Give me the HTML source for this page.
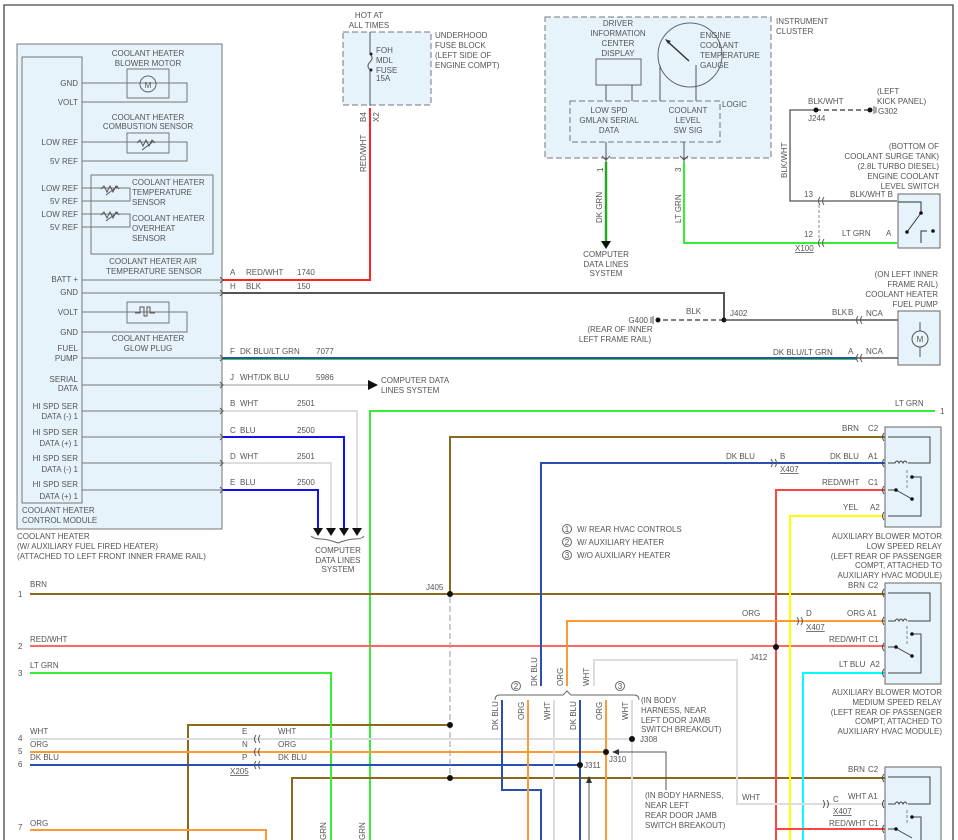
<!DOCTYPE html>
<html><head><meta charset="utf-8"><style>
html,body{margin:0;padding:0;background:#fff}
svg{display:block}
text{font-family:"Liberation Sans",sans-serif;font-size:8px;fill:#555}
.r{text-anchor:end}.m{text-anchor:middle}
</style></head><body>
<svg width="958" height="840" viewBox="0 0 958 840" xmlns="http://www.w3.org/2000/svg">
<rect x="0" y="0" width="958" height="840" fill="#fff"/>
<path d="M4 840V5H953V840" fill="none" stroke="#444" stroke-width="1.3"/>
<!-- module -->
<rect x="17" y="44" width="205" height="485" fill="#e6f3fb" stroke="#777"/>
<rect x="22" y="57" width="60" height="446" fill="#e6f3fb" stroke="#777"/>
<g fill="none" stroke="#777">
<rect x="127" y="69" width="42" height="29"/><rect x="127" y="133" width="42" height="20"/>
<rect x="91" y="175" width="122" height="79"/><rect x="127" y="302" width="42" height="21"/>
<path d="M82 83H187V102H82M82 142H187V161H82M82 188H130V201H82M82 214H130V227H82M82 312H187V332H82"/>
<path d="M82 280H222M82 293H222M82 358H222M82 385H222M82 411H222M82 437H222M82 463H222M82 490H222"/>
</g>
<circle cx="148" cy="84" r="8" fill="none" stroke="#666"/><text x="148" y="88" class="m" font-size="9">M</text>
<path d="M137 143l3-3 3 6 3-6 3 6 3-6 3 3M142 150l12-9" fill="none" stroke="#555"/>
<path d="M101 189l3-3 3 6 3-6 3 6 3-6 3 3M106 195l12-9M101 215l3-3 3 6 3-6 3 6 3-6 3 3M106 221l12-9" fill="none" stroke="#555"/>
<path d="M135 313h5v-6h4v9h3v-9h3v6h5" fill="none" stroke="#555"/>
<g>
<text x="148" y="56" class="m">COOLANT HEATER</text><text x="148" y="66" class="m">BLOWER MOTOR</text>
<text x="148" y="120" class="m">COOLANT HEATER</text><text x="148" y="129" class="m">COMBUSTION SENSOR</text>
<text x="132" y="185">COOLANT HEATER</text><text x="132" y="195">TEMPERATURE</text><text x="132" y="205">SENSOR</text>
<text x="132" y="221">COOLANT HEATER</text><text x="132" y="231">OVERHEAT</text><text x="132" y="241">SENSOR</text>
<text x="153" y="264" class="m">COOLANT HEATER AIR</text><text x="154" y="274" class="m">TEMPERATURE SENSOR</text>
<text x="148" y="341" class="m">COOLANT HEATER</text><text x="148" y="351" class="m">GLOW PLUG</text>
<text x="78" y="86" class="r">GND</text><text x="78" y="105" class="r">VOLT</text>
<text x="78" y="145" class="r">LOW REF</text><text x="78" y="164" class="r">5V REF</text>
<text x="78" y="191" class="r">LOW REF</text><text x="78" y="204" class="r">5V REF</text>
<text x="78" y="217" class="r">LOW REF</text><text x="78" y="230" class="r">5V REF</text>
<text x="78" y="282" class="r">BATT +</text><text x="78" y="295" class="r">GND</text>
<text x="78" y="315" class="r">VOLT</text><text x="78" y="335" class="r">GND</text>
<text x="78" y="351" class="r">FUEL</text><text x="78" y="361" class="r">PUMP</text>
<text x="78" y="382" class="r">SERIAL</text><text x="78" y="391" class="r">DATA</text>
<text x="78" y="409" class="r">HI SPD SER</text><text x="78" y="419" class="r">DATA (-) 1</text>
<text x="78" y="435" class="r">HI SPD SER</text><text x="78" y="446" class="r">DATA (+) 1</text>
<text x="78" y="461" class="r">HI SPD SER</text><text x="78" y="472" class="r">DATA (-) 1</text>
<text x="78" y="487" class="r">HI SPD SER</text><text x="78" y="499" class="r">DATA (+) 1</text>
<text x="22" y="513">COOLANT HEATER</text><text x="22" y="523">CONTROL MODULE</text>
<text x="17" y="539">COOLANT HEATER</text><text x="17" y="549">(W/ AUXILIARY FUEL FIRED HEATER)</text><text x="17" y="559">(ATTACHED TO LEFT FRONT INNER FRAME RAIL)</text>
</g>
<!-- fuse block -->
<rect x="343" y="32" width="88" height="73" fill="#e6f3fb" stroke="#777" stroke-dasharray="6,3"/>
<text x="369" y="18" class="m">HOT AT</text><text x="369" y="28" class="m">ALL TIMES</text>
<text x="435" y="38">UNDERHOOD</text><text x="435" y="48">FUSE BLOCK</text><text x="435" y="58">(LEFT SIDE OF</text><text x="435" y="68">ENGINE COMPT)</text>
<text x="376" y="53">FOH</text><text x="376" y="63">MDL</text><text x="376" y="73">FUSE</text><text x="376" y="81">15A</text>
<path d="M370 32V54M370 70V106" stroke="#555"/><path d="M370 54q4 4 0 8q-4 4 0 8" fill="none" stroke="#555"/>
<circle cx="371" cy="54" r="1.5" fill="#222"/><circle cx="371" cy="70" r="1.5" fill="#222"/>
<text transform="translate(366,122) rotate(-90)">B4</text><text transform="translate(379,122) rotate(-90)">X2</text>
<text transform="translate(366,172) rotate(-90)">RED/WHT</text>
<!-- wires from module -->
<g fill="none" stroke-width="2">
<path d="M222 280H370V108" stroke="#f22"/>
<path d="M222 293H724V320" stroke="#555"/>
<path d="M222 358H857" stroke="#2a4fb0"/><path d="M222 359.5H857" stroke="#4c4" stroke-width="1"/>
<path d="M222 385H368" stroke="#ccc"/>
<path d="M222 411H357V528" stroke="#ddd"/>
<path d="M222 437H344V528" stroke="#11e"/>
<path d="M222 463H331V528" stroke="#ddd"/>
<path d="M222 490H318V528" stroke="#11e"/>
<path d="M370 840V411H935" stroke="#3e3"/>
</g>
<path d="M368 380l10 5-10 5z" fill="#111"/>
<path d="M313 528h10l-5 8zM326 528h10l-5 8zM339 528h10l-5 8zM352 528h10l-5 8z" fill="#111"/>
<path d="M311 536q3 3 10 3q6 0 17 4q10-4 17-4q7 0 9-3" fill="none" stroke="#666"/>
<text x="338" y="553" class="m">COMPUTER</text><text x="338" y="563" class="m">DATA LINES</text><text x="338" y="572" class="m">SYSTEM</text>
<g>
<text x="230" y="275">A</text><text x="246" y="275">RED/WHT</text><text x="297" y="275">1740</text>
<text x="230" y="289">H</text><text x="246" y="289">BLK</text><text x="297" y="289">150</text>
<text x="230" y="354">F</text><text x="240" y="354">DK BLU/LT GRN</text><text x="316" y="354">7077</text>
<text x="230" y="380">J</text><text x="240" y="380">WHT/DK BLU</text><text x="316" y="380">5986</text>
<text x="381" y="383">COMPUTER DATA</text><text x="381" y="393">LINES SYSTEM</text>
<text x="230" y="406">B</text><text x="240" y="406">WHT</text><text x="297" y="406">2501</text>
<text x="230" y="433">C</text><text x="240" y="433">BLU</text><text x="297" y="433">2500</text>
<text x="230" y="459">D</text><text x="240" y="459">WHT</text><text x="297" y="459">2501</text>
<text x="230" y="485">E</text><text x="240" y="485">BLU</text><text x="297" y="485">2500</text>
</g>
<g fill="none" stroke="#555"><path d="M220 277l3 3-3 3M220 290l3 3-3 3M220 355l3 3-3 3M220 382l3 3-3 3M220 408l3 3-3 3M220 434l3 3-3 3M220 460l3 3-3 3M220 487l3 3-3 3"/></g>
<!-- instrument cluster -->
<rect x="545" y="17" width="226" height="141" fill="#e6f3fb" stroke="#777" stroke-dasharray="6,3"/>
<rect x="570" y="101" width="150" height="41" fill="#e6f3fb" stroke="#777" stroke-dasharray="6,3"/>
<rect x="596" y="59" width="45" height="26" fill="#e6f3fb" stroke="#666"/>
<circle cx="690" cy="55" r="32" fill="#e6f3fb" stroke="#666"/>
<path d="M667 41l22 20" stroke="#333" stroke-width="1.5"/><path d="M665 39l6 2-3 3z" fill="#333"/>
<path d="M606 85V101M632 85V101M660 65V101M696 65V101" stroke="#555"/>
<text x="618" y="26" class="m">DRIVER</text><text x="618" y="36" class="m">INFORMATION</text><text x="618" y="46" class="m">CENTER</text><text x="618" y="56" class="m">DISPLAY</text>
<text x="700" y="38">ENGINE</text><text x="700" y="48">COOLANT</text><text x="700" y="58">TEMPERATURE</text><text x="700" y="68">GAUGE</text>
<text x="722" y="107">LOGIC</text>
<text x="609" y="113" class="m">LOW SPD</text><text x="609" y="123" class="m">GMLAN SERIAL</text><text x="609" y="133" class="m">DATA</text>
<text x="688" y="113" class="m">COOLANT</text><text x="688" y="123" class="m">LEVEL</text><text x="688" y="133" class="m">SW SIG</text>
<text x="776" y="24">INSTRUMENT</text><text x="776" y="34">CLUSTER</text>
<path d="M606 142V162M684 142V162" stroke="#555"/>
<path d="M602 156l4 4 4-4M680 156l4 4 4-4" fill="none" stroke="#555"/>
<path d="M606 162V243" stroke="#2a2" stroke-width="2.5"/><path d="M601 241h10l-5 8z" fill="#111"/>
<path d="M684 162V243H897" fill="none" stroke="#3e3" stroke-width="2"/>
<text transform="translate(603,172) rotate(-90)">1</text><text transform="translate(681,172) rotate(-90)">3</text>
<text transform="translate(602,223) rotate(-90)">DK GRN</text><text transform="translate(681,223) rotate(-90)">LT GRN</text>
<text x="606" y="257" class="m">COMPUTER</text><text x="606" y="267" class="m">DATA LINES</text><text x="606" y="276" class="m">SYSTEM</text>
<path d="M816 110H790V201H897" fill="none" stroke="#555" stroke-width="1.3"/>
<path d="M816 110H868" stroke="#555" stroke-width="1.5" stroke-dasharray="5,3"/>
<circle cx="816" cy="110" r="2.5" fill="#111"/><circle cx="870" cy="110" r="2.5" fill="#111"/><path d="M874 106v8M876 107v6" stroke="#555"/>
<text x="808" y="104">BLK/WHT</text><text x="808" y="121">J244</text><text x="878" y="114">G302</text>
<text x="877" y="94">(LEFT</text><text x="877" y="104">KICK PANEL)</text>
<text transform="translate(787,178) rotate(-90)">BLK/WHT</text>
<text x="939" y="149" class="r">(BOTTOM OF</text><text x="939" y="159" class="r">COOLANT SURGE TANK)</text><text x="939" y="169" class="r">(2.8L TURBO DIESEL)</text><text x="939" y="179" class="r">ENGINE COOLANT</text><text x="939" y="189" class="r">LEVEL SWITCH</text>
<text x="804" y="197">13</text><text x="804" y="237">12</text><text x="795" y="251" text-decoration="underline">X100</text>
<text x="850" y="197">BLK/WHT B</text><text x="842" y="236">LT GRN</text><text x="886" y="236">A</text>
<path d="M819 205v35" stroke="#888" stroke-dasharray="3,2"/>
<g fill="none" stroke="#555"><path d="M820 197q-3 4 0 8M824 197q-3 4 0 8M820 239q-3 4 0 8M824 239q-3 4 0 8"/></g>
<rect x="898" y="194" width="42" height="54" fill="#e6f3fb" stroke="#666"/>
<path d="M898 202h23v11M907 232l14-19M921 243V231h6" fill="none" stroke="#333"/>
<circle cx="921" cy="213" r="1.8" fill="#111"/><circle cx="907" cy="232" r="1.8" fill="#111"/><circle cx="933" cy="231" r="1.8" fill="#111"/>
<!-- ground G400 -->
<path d="M724 320H658" stroke="#555" stroke-width="1.5" stroke-dasharray="5,3"/>
<circle cx="724" cy="320" r="2.5" fill="#111"/><circle cx="658" cy="320" r="2.5" fill="#111"/><path d="M653 316v8M651 317v6" stroke="#555"/>
<path d="M724 320H898M857 358H898" stroke="#333" stroke-width="1.3"/>
<g fill="none" stroke="#555"><path d="M858 316q-3 4 0 8M862 316q-3 4 0 8M858 354q-3 4 0 8M862 354q-3 4 0 8"/></g>
<text x="648" y="323" class="r">G400</text><text x="686" y="314">BLK</text><text x="730" y="316">J402</text>
<text x="620" y="332" class="m">(REAR OF INNER</text><text x="615" y="342" class="m">LEFT FRAME RAIL)</text>
<text x="832" y="315">BLK</text><text x="848" y="315">B</text><text x="866" y="316">NCA</text>
<text x="773" y="355">DK BLU/LT GRN</text><text x="848" y="354">A</text><text x="866" y="354">NCA</text>
<text x="938" y="277" class="r">(ON LEFT INNER</text><text x="938" y="287" class="r">FRAME RAIL)</text><text x="938" y="297" class="r">COOLANT HEATER</text><text x="938" y="307" class="r">FUEL PUMP</text>
<rect x="898" y="311" width="42" height="54" fill="#e6f3fb" stroke="#666"/>
<circle cx="920" cy="339" r="8" fill="none" stroke="#555"/><path d="M920 322v9M920 347v10" stroke="#555"/><text x="920" y="342" class="m" font-size="9">M</text>
<text x="895" y="406">LT GRN</text><text x="940" y="414">1</text>
<!-- lower section -->
<g fill="none" stroke-width="2">
<path d="M30 594H885M450 594V437H885" stroke="#8a6a1a"/>
<path d="M188 840V725H450M292 840V778H885" stroke="#8a6a1a"/>
<path d="M30 646H885" stroke="#f66"/>
<path d="M30 673H331V840" stroke="#3e3"/>
<path d="M30 739H632V700" stroke="#ddd"/>
<path d="M30 752H606" stroke="#f93"/>
<path d="M30 765H580" stroke="#2a4fb0"/>
<path d="M30 830H266V840" stroke="#f93"/>
<path d="M541 686V463H885" stroke="#2a4fb0"/>
<path d="M776 840V490H885" stroke="#f44"/>
<path d="M790 840V516H885" stroke="#ff0"/>
<path d="M567 686V621H885" stroke="#f93"/>
<path d="M803 840V673H885" stroke="#0ff"/>
<path d="M594 686V660H737V804H885" stroke="#ddd"/>
<path d="M776 829H885" stroke="#f44"/>
<path d="M502 700V790H541V840" stroke="#2a4fb0"/>
<path d="M528 700V840M606 700V840" stroke="#f93"/>
<path d="M554 700V840M632 700V840" stroke="#ddd"/>
<path d="M580 700V840" stroke="#2a4fb0"/>
</g>
<path d="M450 597V778" stroke="#999" stroke-dasharray="6,3"/>
<circle cx="450" cy="594" r="3" fill="#111"/><circle cx="450" cy="725" r="3" fill="#111"/><circle cx="450" cy="778" r="3" fill="#111"/>
<circle cx="776" cy="647" r="3" fill="#111"/><circle cx="632" cy="739" r="3" fill="#111"/><circle cx="606" cy="752" r="3" fill="#111"/><circle cx="580" cy="765" r="3" fill="#111"/>
<path d="M495 700q0-5 5-5h63l4-4 4 4h63q5 0 5 5" fill="none" stroke="#666"/>
<path d="M612 752l7-3v6zM589 776l-3 7h6z" fill="#333"/><path d="M619 752H666V790M589 783V840" fill="none" stroke="#555"/>
<g fill="none" stroke="#555">
<path d="M256 735q-3 4 0 8M260 735q-3 4 0 8M256 748q-3 4 0 8M260 748q-3 4 0 8M256 761q-3 4 0 8M260 761q-3 4 0 8"/>
<path d="M771 459q3 4 0 8M775 459q3 4 0 8M797 617q3 4 0 8M801 617q3 4 0 8M823 800q3 4 0 8M827 800q3 4 0 8"/>
</g>
<g>
<text x="18" y="597">1</text><text x="30" y="587">BRN</text>
<text x="18" y="649">2</text><text x="30" y="642">RED/WHT</text>
<text x="18" y="676">3</text><text x="30" y="668">LT GRN</text>
<text x="18" y="741">4</text><text x="30" y="734">WHT</text>
<text x="18" y="754">5</text><text x="30" y="747">ORG</text>
<text x="18" y="767">6</text><text x="30" y="760">DK BLU</text>
<text x="18" y="830">7</text><text x="30" y="826">ORG</text>
<text x="242" y="734">E</text><text x="242" y="747">N</text><text x="242" y="760">P</text><text x="230" y="774" text-decoration="underline">X205</text>
<text x="278" y="734">WHT</text><text x="278" y="747">ORG</text><text x="278" y="760">DK BLU</text>
<text x="426" y="590">J405</text>
<text transform="translate(326,840) rotate(-90)">GRN</text><text transform="translate(365,840) rotate(-90)">GRN</text>
<text x="577" y="532">W/ REAR HVAC CONTROLS</text><text x="577" y="545">W/ AUXILIARY HEATER</text><text x="577" y="558">W/O AUXILIARY HEATER</text>
<circle cx="567" cy="529" r="4.5" fill="none" stroke="#666"/><text x="567" y="532" class="m" font-size="7">1</text>
<circle cx="567" cy="542" r="4.5" fill="none" stroke="#666"/><text x="567" y="545" class="m" font-size="7">2</text>
<circle cx="567" cy="555" r="4.5" fill="none" stroke="#666"/><text x="567" y="558" class="m" font-size="7">3</text>
<circle cx="516" cy="686" r="4.5" fill="none" stroke="#666"/><text x="516" y="689" class="m" font-size="7">2</text>
<circle cx="620" cy="686" r="4.5" fill="none" stroke="#666"/><text x="620" y="689" class="m" font-size="7">3</text>
<text transform="translate(537,686) rotate(-90)">DK BLU</text><text transform="translate(563,686) rotate(-90)">ORG</text><text transform="translate(589,686) rotate(-90)">WHT</text>
<text transform="translate(498,730) rotate(-90)">DK BLU</text><text transform="translate(524,720) rotate(-90)">ORG</text><text transform="translate(550,720) rotate(-90)">WHT</text>
<text transform="translate(576,730) rotate(-90)">DK BLU</text><text transform="translate(602,720) rotate(-90)">ORG</text><text transform="translate(628,720) rotate(-90)">WHT</text>
<text x="641" y="703">(IN BODY</text><text x="641" y="713">HARNESS, NEAR</text><text x="641" y="723">LEFT DOOR JAMB</text><text x="641" y="732">SWITCH BREAKOUT)</text>
<text x="640" y="742">J308</text><text x="609" y="762">J310</text><text x="584" y="768">J311</text>
<text x="645" y="798">(IN BODY HARNESS,</text><text x="645" y="808">NEAR LEFT</text><text x="645" y="818">REAR DOOR JAMB</text><text x="645" y="828">SWITCH BREAKOUT)</text>
<text x="726" y="459">DK BLU</text><text x="780" y="459">B</text><text x="780" y="472" text-decoration="underline">X407</text>
<text x="842" y="431">BRN</text><text x="868" y="431">C2</text>
<text x="830" y="459">DK BLU</text><text x="868" y="459">A1</text>
<text x="822" y="485">RED/WHT</text><text x="868" y="485">C1</text>
<text x="843" y="510">YEL</text><text x="870" y="510">A2</text>
<text x="942" y="539" class="r">AUXILIARY BLOWER MOTOR</text><text x="942" y="549" class="r">LOW SPEED RELAY</text><text x="942" y="559" class="r">(LEFT REAR OF PASSENGER</text><text x="942" y="568" class="r">COMPT, ATTACHED TO</text><text x="942" y="578" class="r">AUXILIARY HVAC MODULE)</text>
<text x="848" y="588">BRN</text><text x="868" y="588">C2</text>
<text x="742" y="616">ORG</text><text x="806" y="616">D</text><text x="806" y="630" text-decoration="underline">X407</text>
<text x="847" y="616">ORG A1</text><text x="829" y="642">RED/WHT C1</text>
<text x="750" y="660">J412</text>
<text x="839" y="667">LT BLU</text><text x="870" y="667">A2</text>
<text x="942" y="695" class="r">AUXILIARY BLOWER MOTOR</text><text x="942" y="705" class="r">MEDIUM SPEED RELAY</text><text x="942" y="715" class="r">(LEFT REAR OF PASSENGER</text><text x="942" y="724" class="r">COMPT, ATTACHED TO</text><text x="942" y="734" class="r">AUXILIARY HVAC MODULE)</text>
<text x="742" y="800">WHT</text><text x="833" y="802">C</text><text x="833" y="814" text-decoration="underline">X407</text>
<text x="848" y="772">BRN</text><text x="868" y="772">C2</text><text x="848" y="799">WHT A1</text><text x="829" y="826">RED/WHT C1</text>
</g>
<g fill="#e6f3fb" stroke="#666">
<rect x="885" y="427" width="56" height="100"/><rect x="885" y="583" width="56" height="101"/><rect x="885" y="767" width="56" height="80"/>
</g>
<g fill="none" stroke="#444">
<path d="M888 437h42v26h-22M888 463h7q2-4 4-0q2-4 4 0q2-4 4 0M888 490h8l16 9M912 477h9v39h-33"/>
<path d="M888 593h42v28h-22M888 621h7q2-4 4-0q2-4 4 0q2-4 4 0M888 647h8l16 9M912 634h9v39h-33"/>
<path d="M888 777h42v27h-22M888 804h7q2-4 4-0q2-4 4 0q2-4 4 0M888 829h8l16 9M912 817h9v23"/>
<path d="M884 433q-3 4 0 8M884 459q-3 4 0 8M884 486q-3 4 0 8M884 512q-3 4 0 8M884 589q-3 4 0 8M884 617q-3 4 0 8M884 643q-3 4 0 8M884 669q-3 4 0 8M884 774q-3 4 0 8M884 800q-3 4 0 8M884 825q-3 4 0 8"/>
</g>
<g fill="#111"><circle cx="896" cy="490" r="1.8"/><circle cx="912" cy="499" r="1.8"/><circle cx="912" cy="477" r="1.8"/><circle cx="896" cy="647" r="1.8"/><circle cx="912" cy="656" r="1.8"/><circle cx="912" cy="634" r="1.8"/><circle cx="896" cy="829" r="1.8"/><circle cx="912" cy="817" r="1.8"/></g>
<path d="M907 470v20M907 626v20M907 810v15" stroke="#888" stroke-dasharray="3,2"/>
</svg>
</body></html>
